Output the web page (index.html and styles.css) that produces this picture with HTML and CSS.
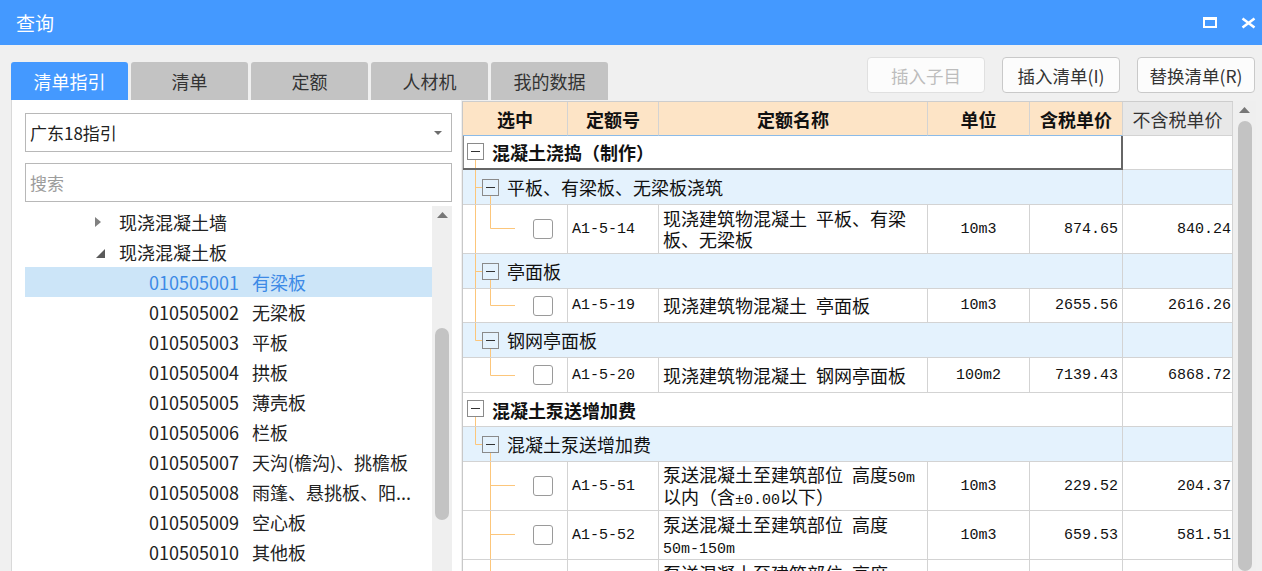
FILE: index.html
```html
<!doctype html>
<html lang="zh-CN">
<head>
    <meta charset="UTF-8">
    <title>查询</title>
    <link rel="stylesheet" href="styles.css">
</head>
<body>
<div class="titlebar">
    <span class="title">查询</span>
    <div class="win-btns">
        <svg width="14" height="11"><path d="M0 0H14V11H0Z M2 3V9H12V3Z" fill="#fff" fill-rule="evenodd"/></svg>
        <svg width="15" height="12"><path d="M1.5 1.5L13.5 10.5M13.5 1.5L1.5 10.5" stroke="#fff" stroke-width="2.6"/></svg>
    </div>
</div>

<div class="toolbar">
    <div class="tabs">
        <div class="tab active">清单指引</div>
        <div class="tab">清单</div>
        <div class="tab">定额</div>
        <div class="tab">人材机</div>
        <div class="tab">我的数据</div>
    </div>
    <div class="actions">
        <div class="btn disabled">插入子目</div>
        <div class="btn">插入清单(I)</div>
        <div class="btn">替换清单(R)</div>
    </div>
</div>

<div class="main">
    <div class="left">
        <div class="select">
            <span>广东18指引</span>
            <svg width="8" height="4"><path d="M0 0H8L4 4Z" fill="#6d6d6d"/></svg>
        </div>
        <div class="search">搜索</div>
        <div class="tree-wrap">
            <div class="tree">
                <div class="node parent">
                    <span class="tw"><svg width="6" height="10"><path d="M0 0L6 5L0 10Z" fill="#808080"/></svg></span>
                    现浇混凝土墙
                </div>
                <div class="node parent">
                    <span class="tw"><svg class="open" width="9" height="9"><path d="M9 0V9H0Z" fill="#5a5a5a"/></svg></span>
                    现浇混凝土板
                </div>
                <div class="node leaf sel"><span class="bm">010505001</span><span>有梁板</span></div>
                <div class="node leaf"><span class="bm">010505002</span><span>无梁板</span></div>
                <div class="node leaf"><span class="bm">010505003</span><span>平板</span></div>
                <div class="node leaf"><span class="bm">010505004</span><span>拱板</span></div>
                <div class="node leaf"><span class="bm">010505005</span><span>薄壳板</span></div>
                <div class="node leaf"><span class="bm">010505006</span><span>栏板</span></div>
                <div class="node leaf"><span class="bm">010505007</span><span>天沟(檐沟)、挑檐板</span></div>
                <div class="node leaf"><span class="bm">010505008</span><span>雨篷、悬挑板、阳...</span></div>
                <div class="node leaf"><span class="bm">010505009</span><span>空心板</span></div>
                <div class="node leaf"><span class="bm">010505010</span><span>其他板</span></div>
            </div>
            <div class="vscroll small">
                <svg class="arrow" width="11" height="6"><path d="M0 6L5.5 0L11 6Z" fill="#777"/></svg>
                <div class="thumb tree-thumb"></div>
            </div>
        </div>
    </div>

    <div class="right">
        <div class="grid">
            <div class="row head">
                <div class="c h">选中</div>
                <div class="c h">定额号</div>
                <div class="c h">定额名称</div>
                <div class="c h">单位</div>
                <div class="c h">含税单价</div>
                <div class="c h plain">不含税单价</div>
            </div>

            <div class="row r34">
                <div class="c span5 focus">
                    <svg width="29" height="32">
                        <path d="M12.5 24V32" class="ln"/>
                        <rect x="4.5" y="7.5" width="16" height="16" class="bx"/>
                        <path d="M8 15.5H17" class="mn"/>
                    </svg>
                    <b class="top-text">混凝土浇捣（制作）</b>
                </div>
                <div class="c"></div>
            </div>

            <div class="row r35 grp">
                <div class="c span5">
                    <svg width="44" height="34">
                        <path d="M12.5 0V34M12.5 17.5H19M27.5 26V34" class="ln"/>
                        <rect x="19.5" y="9.5" width="16" height="16" class="bx"/>
                        <path d="M23 17.5H32" class="mn"/>
                    </svg>
                    平板、有梁板、无梁板浇筑
                </div>
                <div class="c"></div>
            </div>
            <div class="row r49">
                <div class="c sel-cell">
                    <svg width="60" height="48"><path d="M12.5 0V48M27.5 0V23.5H52" class="ln"/></svg>
                    <span class="chk"></span>
                </div>
                <div class="c code">A1-5-14</div>
                <div class="c name"><span>现浇建筑物混凝土&ensp;平板、有梁<br>板、无梁板</span></div>
                <div class="c unit">10m3</div>
                <div class="c num">874.65</div>
                <div class="c num last">840.24</div>
            </div>

            <div class="row r35 grp">
                <div class="c span5">
                    <svg width="44" height="34">
                        <path d="M12.5 0V34M12.5 17.5H19M27.5 26V34" class="ln"/>
                        <rect x="19.5" y="9.5" width="16" height="16" class="bx"/>
                        <path d="M23 17.5H32" class="mn"/>
                    </svg>
                    亭面板
                </div>
                <div class="c"></div>
            </div>
            <div class="row r34">
                <div class="c sel-cell">
                    <svg width="60" height="33"><path d="M12.5 0V33M27.5 0V16.5H52" class="ln"/></svg>
                    <span class="chk"></span>
                </div>
                <div class="c code">A1-5-19</div>
                <div class="c name"><span>现浇建筑物混凝土&ensp;亭面板</span></div>
                <div class="c unit">10m3</div>
                <div class="c num">2655.56</div>
                <div class="c num last">2616.26</div>
            </div>

            <div class="row r35 grp">
                <div class="c span5">
                    <svg width="44" height="34">
                        <path d="M12.5 0V17.5H19M27.5 26V34" class="ln"/>
                        <rect x="19.5" y="9.5" width="16" height="16" class="bx"/>
                        <path d="M23 17.5H32" class="mn"/>
                    </svg>
                    钢网亭面板
                </div>
                <div class="c"></div>
            </div>
            <div class="row r35">
                <div class="c sel-cell">
                    <svg width="60" height="34"><path d="M27.5 0V17.5H52" class="ln"/></svg>
                    <span class="chk"></span>
                </div>
                <div class="c code">A1-5-20</div>
                <div class="c name"><span>现浇建筑物混凝土&ensp;钢网亭面板</span></div>
                <div class="c unit">100m2</div>
                <div class="c num">7139.43</div>
                <div class="c num last">6868.72</div>
            </div>

            <div class="row r34">
                <div class="c span5">
                    <svg width="29" height="33">
                        <path d="M12.5 24V33" class="ln"/>
                        <rect x="4.5" y="7.5" width="16" height="16" class="bx"/>
                        <path d="M8 15.5H17" class="mn"/>
                    </svg>
                    <b class="top-text">混凝土泵送增加费</b>
                </div>
                <div class="c"></div>
            </div>

            <div class="row r35 grp">
                <div class="c span5">
                    <svg width="44" height="34">
                        <path d="M12.5 0V17.5H19M27.5 26V34" class="ln"/>
                        <rect x="19.5" y="9.5" width="16" height="16" class="bx"/>
                        <path d="M23 17.5H32" class="mn"/>
                    </svg>
                    混凝土泵送增加费
                </div>
                <div class="c"></div>
            </div>
            <div class="row r49">
                <div class="c sel-cell">
                    <svg width="60" height="48"><path d="M27.5 0V48M27.5 23.5H52" class="ln"/></svg>
                    <span class="chk"></span>
                </div>
                <div class="c code">A1-5-51</div>
                <div class="c name"><span>泵送混凝土至建筑部位&ensp;高度<i class="m">50m</i><br>以内（含<i class="m">±0.00</i>以下）</span></div>
                <div class="c unit">10m3</div>
                <div class="c num">229.52</div>
                <div class="c num last">204.37</div>
            </div>
            <div class="row r49">
                <div class="c sel-cell">
                    <svg width="60" height="48"><path d="M27.5 0V48M27.5 23.5H52" class="ln"/></svg>
                    <span class="chk"></span>
                </div>
                <div class="c code">A1-5-52</div>
                <div class="c name"><span>泵送混凝土至建筑部位&ensp;高度<br><i class="m">50m-150m</i></span></div>
                <div class="c unit">10m3</div>
                <div class="c num">659.53</div>
                <div class="c num last">581.51</div>
            </div>
            <div class="row r49">
                <div class="c sel-cell">
                    <svg width="60" height="48"><path d="M27.5 0V48M27.5 23.5H52" class="ln"/></svg>
                    <span class="chk"></span>
                </div>
                <div class="c code">A1-5-53</div>
                <div class="c name"><span>泵送混凝土至建筑部位&ensp;高度<br><i class="m">150m</i>以上</span></div>
                <div class="c unit">10m3</div>
                <div class="c num">789.20</div>
                <div class="c num last">700.12</div>
            </div>
        </div>
        <div class="vscroll big">
            <svg class="arrow" width="11" height="6"><path d="M0 6L5.5 0L11 6Z" fill="#777"/></svg>
            <div class="thumb grid-thumb"></div>
        </div>
    </div>
</div>
</body>
</html>
```

FILE: styles.css
```css
html, body {
    margin: 0;
    padding: 0;
}

body {
    height: 571px;
    overflow: hidden;
    display: flex;
    flex-direction: column;
    background: #f0f0f0;
    color: #222;
    font-family: "Noto Sans CJK SC", "Noto Sans", sans-serif;
}

/* title bar */
.titlebar {
    height: 45px;
    flex: none;
    background: #4499ff;
    color: #fff;
    display: flex;
    align-items: center;
    justify-content: space-between;
    padding: 0 6px 0 16px;
}

.title {
    font-size: 19px;
}

.win-btns {
    display: flex;
    align-items: center;
    gap: 24px;
}

.win-btns svg {
    display: block;
}

/* tabs + buttons */
.toolbar {
    height: 55px;
    flex: none;
    display: flex;
    justify-content: space-between;
    padding: 0 7px 0 11px;
}

.tabs {
    display: flex;
    gap: 3px;
    align-self: flex-end;
}

.tab {
    width: 117px;
    height: 38px;
    background: #c3c3c3;
    border-radius: 3px 3px 0 0;
    display: flex;
    align-items: center;
    justify-content: center;
    font-size: 18px;
    color: #333;
}

.tab.active {
    background: #4499ff;
    color: #fff;
}

.actions {
    display: flex;
    gap: 17px;
    padding-top: 12px;
}

.btn {
    width: 118px;
    height: 36px;
    box-sizing: border-box;
    border: 1px solid #c9c9c9;
    border-radius: 4px;
    background: #fcfcfc;
    display: flex;
    align-items: center;
    justify-content: center;
    font-size: 17.5px;
    color: #333;
}

.btn.disabled {
    color: #bdbdbd;
    border-color: #e0e0e0;
}

/* main */
.main {
    flex: 1;
    min-height: 0;
    display: flex;
    padding: 0 6px 0 11px;
}

.left {
    width: 450px;
    flex: none;
    box-sizing: border-box;
    background: #fff;
    border-left: 1px solid #d9d9d9;
    padding: 13px 9px 0 13px;
    display: flex;
    flex-direction: column;
}

.select, .search {
    height: 39px;
    box-sizing: border-box;
    border: 1px solid #b8b8b8;
    display: flex;
    align-items: center;
    padding: 0 9px 0 4px;
    font-size: 17px;
}

.select {
    justify-content: space-between;
}

.search {
    margin-top: 11px;
    color: #9c9c9c;
}

.tree-wrap {
    flex: 1;
    min-height: 0;
    display: flex;
    margin-top: 4px;
    overflow: hidden;
}

.tree {
    flex: 1;
    padding-top: 1px;
}

.node {
    height: 30px;
    display: flex;
    align-items: center;
    font-size: 18px;
    white-space: nowrap;
    color: #222;
}

.node.parent {
    padding-left: 70px;
}

.node.leaf {
    padding-left: 124px;
}

.node.sel {
    background: #cce5f8;
    color: #3d8ae6;
}

.tw {
    width: 24px;
    display: flex;
    align-items: center;
}

.tw .open {
    margin-left: 1px;
    margin-top: 2px;
}

.bm {
    margin-right: 13px;
}

/* scroll bars */
.vscroll {
    flex: none;
    background: #efefef;
    display: flex;
    flex-direction: column;
    align-items: center;
}

.vscroll.small {
    width: 20px;
}

.vscroll.big {
    width: 23px;
}

.vscroll .arrow {
    display: block;
    margin-top: 6px;
}

.thumb {
    width: 14px;
    background: #c3c3c3;
    border-radius: 7px;
}

.tree-thumb {
    margin-top: 110px;
    height: 192px;
}

.grid-thumb {
    margin-top: 8px;
    height: 470px;
}

/* right table */
.right {
    flex: 1;
    display: flex;
    margin-left: 1px;
    padding-top: 1px;
    overflow: hidden;
}

.grid {
    width: 771px;
    flex: none;
    box-sizing: border-box;
    border-left: 1px solid #c8c8c8;
    border-top: 1px solid #cdcdcd;
    background: #fff;
    font-size: 18px;
    color: #111;
}

.row {
    display: grid;
    grid-template-columns: 105px 91px 269px 102px 93px 110px;
    box-sizing: border-box;
}

.head { height: 34px; }
.r34 { height: 34px; }
.r35 { height: 35px; }
.r49 { height: 49px; }

.c {
    box-sizing: border-box;
    border-right: 1px solid #d3d3d3;
    border-bottom: 1px solid #d3d3d3;
    display: flex;
    align-items: center;
    overflow: hidden;
    white-space: nowrap;
}

.c svg {
    display: block;
    flex: none;
    align-self: flex-start;
}

.h {
    justify-content: center;
    background: #fde4c6;
    font-weight: 700;
    border-bottom-color: #8bbbe8;
}

.h.plain {
    background: #e8e8e8;
    font-weight: 400;
    color: #333;
    border-bottom-color: #d3d3d3;
}

.span5 {
    grid-column: span 5;
}

.focus {
    border-right: 2px solid #666;
    border-bottom: 2px solid #666;
    box-shadow: inset 1px 0 0 #8a8a8a;
}

.top-text {
    font-weight: 700;
}

.grp .c {
    background: #e4f2fd;
}

.ln {
    stroke: #fcc67b;
    stroke-width: 1;
    fill: none;
}

.bx {
    stroke: #8a8a8a;
    fill: none;
}

.mn {
    stroke: #333;
    stroke-width: 1;
}

.sel-cell .chk {
    width: 20px;
    height: 20px;
    box-sizing: border-box;
    border: 1px solid #9a9a9a;
    border-radius: 3px;
    background: #fff;
    margin-left: 10px;
}

.code, .unit, .num, .m {
    font-family: "Liberation Mono", "DejaVu Sans Mono", monospace;
    font-size: 15px;
    font-style: normal;
}

.c.code {
    padding-left: 4px;
}

.name {
    padding-left: 4px;
}

.name span {
    display: block;
    line-height: 21px;
}

.name .m {
    line-height: 1;
}

.unit {
    justify-content: center;
}

.num {
    justify-content: flex-end;
    padding-right: 4px;
}

.num.last {
    padding-right: 1px;
}
```
